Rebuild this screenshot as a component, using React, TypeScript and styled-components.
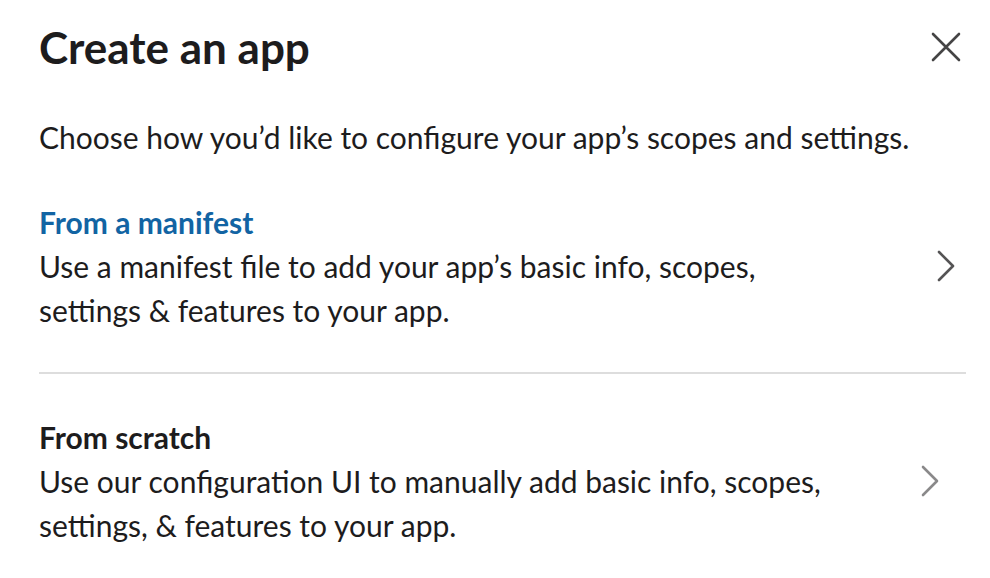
import * as React from 'react';
import styled, { createGlobalStyle } from 'styled-components';

const GlobalStyle = createGlobalStyle`
	html, body {
		margin: 0;
		padding: 0;
		background: #ffffff;
	}
	body {
		font-family: Lato, "Noto Sans", sans-serif;
		color: #1d1c1d;
		-webkit-font-smoothing: antialiased;
	}
`;

const Modal = styled.div`
	box-sizing: border-box;
	width: 990px;
	height: 578px;
	padding: 19px 24px 0 39px;
	background: #ffffff;
	overflow: hidden;
`;

const Header = styled.div`
	display: flex;
	align-items: center;
	justify-content: space-between;
`;

const Title = styled.h1`
	margin: 0;
	font-size: 44px;
	line-height: 56px;
	font-weight: 700;
	color: #1d1c1d;
`;

const CloseButton = styled.button`
	display: flex;
	align-items: center;
	justify-content: center;
	width: 36px;
	height: 36px;
	margin-right: 2px;
	padding: 0;
	border: 0;
	background: none;
	color: #454445;
	cursor: pointer;
`;

const Intro = styled.p`
	margin: 40px 0 0;
	font-size: 30px;
	line-height: 44px;
	color: #1d1c1d;
`;

const Options = styled.div`
	display: flex;
	flex-direction: column;
	margin-top: 41px;
`;

const Option = styled.div`
	display: flex;
	align-items: center;
	justify-content: space-between;
	cursor: pointer;
`;

const OptionText = styled.div`
	width: 815px;
`;

const OptionTitle = styled.div<{ $accent?: boolean }>`
	font-size: 30px;
	line-height: 44px;
	font-weight: 700;
	color: ${p => (p.$accent ? '#1264a3' : '#1d1c1d')};
`;

const OptionDescription = styled.div`
	font-size: 30px;
	line-height: 44px;
	color: #1d1c1d;
`;

const Chevron = styled.span<{ $muted?: boolean; $offset: number }>`
	display: flex;
	margin-right: ${p => p.$offset}px;
	color: ${p => (p.$muted ? '#8a898a' : '#555455')};
`;

const Divider = styled.hr`
	margin: 40px 0 41px;
	border: 0;
	border-top: 2px solid #dddddd;
`;

function ChevronIcon() {
	return (
		<svg width="20" height="32" viewBox="0 0 20 32" fill="none">
			<path d="M3 2 L17 16 L3 30" stroke="currentColor" strokeWidth="2.6" strokeLinecap="round" strokeLinejoin="round" />
		</svg>
	);
}

export default function App() {
	return (
		<>
			<GlobalStyle />
			<Modal>
				<Header>
					<Title>Create an app</Title>
					<CloseButton aria-label="Close">
						<svg width="30" height="30" viewBox="0 0 30 30" fill="none">
							<path d="M2 2 L28 28 M28 2 L2 28" stroke="currentColor" strokeWidth="2.6" strokeLinecap="round" />
						</svg>
					</CloseButton>
				</Header>
				<Intro>Choose how you’d like to configure your app’s scopes and settings.</Intro>
				<Options>
					<Option>
						<OptionText>
							<OptionTitle $accent>From a manifest</OptionTitle>
							<OptionDescription>
								Use a manifest file to add your app’s basic info, scopes, settings &amp; features to your app.
							</OptionDescription>
						</OptionText>
						<Chevron $offset={10}>
							<ChevronIcon />
						</Chevron>
					</Option>
					<Divider />
					<Option>
						<OptionText>
							<OptionTitle>From scratch</OptionTitle>
							<OptionDescription>
								Use our configuration UI to manually add basic info, scopes, settings, &amp; features to your app.
							</OptionDescription>
						</OptionText>
						<Chevron $muted $offset={26}>
							<ChevronIcon />
						</Chevron>
					</Option>
				</Options>
			</Modal>
		</>
	);
}
